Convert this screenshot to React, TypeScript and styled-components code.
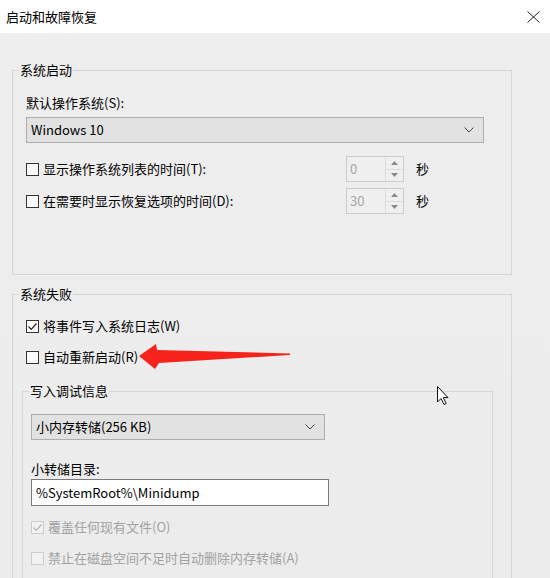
import React from "react";
import styled, { createGlobalStyle } from "styled-components";

const GlobalStyle = createGlobalStyle`
  html, body {
    margin: 0;
    padding: 0;
    background: #ededed;
  }
  body {
    font-family: "Noto Sans CJK SC", "Noto Sans", sans-serif;
    font-size: 13px;
    color: #000;
  }
`;

const Window = styled.div`
  position: relative;
  width: 550px;
  height: 578px;
  overflow: hidden;
  background: linear-gradient(180deg, #eeeeee 0%, #ececec 100%);
`;

const TitleBar = styled.div`
  height: 33px;
  background: #ffffff;
  display: flex;
  align-items: center;
  justify-content: space-between;
  padding: 0 10px 0 6px;
  box-sizing: border-box;
`;

const Title = styled.span`
  font-size: 13px;
  line-height: 20px;
  color: #000;
`;

const Body = styled.div`
  padding: 0 0 0 12px;
`;

const Group = styled.fieldset<{ $top: number; $width: number; $pad: number; $bottom?: number }>`
  margin: ${(p) => p.$top}px 0 0 0;
  width: ${(p) => p.$width}px;
  box-sizing: border-box;
  border: 1px solid #d6d6d6;
  padding: 0 0 ${(p) => p.$bottom ?? 0}px ${(p) => p.$pad}px;
  min-width: 0;
`;

const Legend = styled.legend<{ $shift: number }>`
  margin-left: ${(p) => p.$shift}px;
  padding: 0 1px;
  line-height: 20px;
  font-size: 13px;
  color: #000;
`;

const InnerGroup = styled(Group)`
  margin-left: -4px;
  height: 220px;
`;

const Label = styled.div<{ $top: number }>`
  margin-top: ${(p) => p.$top}px;
  line-height: 20px;
  height: 20px;
`;

const Select = styled.div<{ $top: number; $width: number }>`
  margin-top: ${(p) => p.$top}px;
  width: ${(p) => p.$width}px;
  height: 26px;
  box-sizing: border-box;
  border: 1px solid #adadad;
  background: #e2e2e2;
  display: flex;
  align-items: center;
  justify-content: space-between;
  padding: 0 9px 0 4px;
  line-height: 20px;
`;

const TextInput = styled.div`
  width: 298px;
  height: 27px;
  box-sizing: border-box;
  border: 1px solid #7a7a7a;
  background: #ffffff;
  display: flex;
  align-items: center;
  padding: 0 4px;
  line-height: 20px;
`;

const SpinRow = styled.div<{ $top: number }>`
  margin-top: ${(p) => p.$top}px;
  display: grid;
  grid-template-columns: 308px 58px auto;
  column-gap: 12px;
  align-items: center;
  height: 26px;
`;

const CheckRow = styled.div<{ $top: number; $disabled?: boolean }>`
  margin-top: ${(p) => p.$top}px;
  display: flex;
  align-items: center;
  gap: 4px;
  height: 20px;
  line-height: 20px;
  color: ${(p) => (p.$disabled ? "#a2a2a2" : "#000")};
`;

const Box = styled.span<{ $disabled?: boolean }>`
  width: 13px;
  height: 13px;
  box-sizing: border-box;
  border: 1px solid ${(p) => (p.$disabled ? "#cccccc" : "#333333")};
  background: ${(p) => (p.$disabled ? "#f2f2f2" : "#fbfbfb")};
  display: flex;
  align-items: center;
  justify-content: center;
  flex: none;
`;

const Spinner = styled.div`
  height: 26px;
  box-sizing: border-box;
  border: 1px solid #cccccc;
  display: flex;
  background: #efefef;
`;

const SpinValue = styled.span`
  flex: 1;
  color: #a6a6a6;
  padding-left: 3px;
  line-height: 24px;
`;

const SpinButtons = styled.div`
  width: 17px;
  display: flex;
  flex-direction: column;
  border-left: 1px solid #dcdcdc;
`;

const SpinButton = styled.div<{ $last?: boolean }>`
  flex: 1;
  display: flex;
  align-items: center;
  justify-content: center;
  border-top: ${(p) => (p.$last ? "1px solid #dcdcdc" : "none")};
`;

const Unit = styled.span`
  line-height: 20px;
`;

const Overlay = styled.svg<{ $x: number; $y: number }>`
  position: absolute;
  left: ${(p) => p.$x}px;
  top: ${(p) => p.$y}px;
  pointer-events: none;
`;

const Chevron = () => (
  <svg width="10" height="6" viewBox="0 0 10 6">
    <polyline points="0.5,0.5 5,5 9.5,0.5" fill="none" stroke="#444" strokeWidth="1" />
  </svg>
);

const Check = ({ color }: { color: string }) => (
  <svg width="11" height="11" viewBox="0 0 11 11">
    <polyline points="1.5,5.5 4.2,8.3 9.5,2.5" fill="none" stroke={color} strokeWidth="1.2" />
  </svg>
);

const Tri = ({ up }: { up?: boolean }) => (
  <svg width="7" height="4" viewBox="0 0 7 4">
    <polygon points={up ? "0,4 3.5,0 7,4" : "0,0 3.5,4 7,0"} fill="#8a8a8a" />
  </svg>
);

const CheckBox = ({ checked, disabled }: { checked?: boolean; disabled?: boolean }) => (
  <Box $disabled={disabled}>{checked && <Check color={disabled ? "#b4b4b4" : "#222"} />}</Box>
);

const SpinField = ({ label, value, top }: { label: string; value: string; top: number }) => (
  <SpinRow $top={top}>
    <CheckRow $top={0}>
      <CheckBox />
      <span>{label}</span>
    </CheckRow>
    <Spinner>
      <SpinValue>{value}</SpinValue>
      <SpinButtons>
        <SpinButton>
          <Tri up />
        </SpinButton>
        <SpinButton $last>
          <Tri />
        </SpinButton>
      </SpinButtons>
    </Spinner>
    <Unit>秒</Unit>
  </SpinRow>
);

const App: React.FC = () => {
  return (
    <>
      <GlobalStyle />
      <Window>
        <TitleBar>
          <Title>启动和故障恢复</Title>
          <svg width="13" height="12" viewBox="0 0 13 12">
            <path d="M0.5 0.5 L12.5 11.5 M12.5 0.5 L0.5 11.5" stroke="#222" strokeWidth="1" />
          </svg>
        </TitleBar>
        <Body>
          <Group $top={27} $width={500} $pad={13} $bottom={60}>
            <Legend $shift={-7}>系统启动</Legend>
            <Label $top={13}>默认操作系统(S):</Label>
            <Select $top={4} $width={458}>
              <span>Windows 10</span>
              <Chevron />
            </Select>
            <SpinField top={13} label="显示操作系统列表的时间(T):" value="0" />
            <SpinField top={6} label="在需要时显示恢复选项的时间(D):" value="30" />
          </Group>

          <Group $top={9} $width={500} $pad={13}>
            <Legend $shift={-7}>系统失败</Legend>
            <CheckRow $top={12}>
              <CheckBox checked />
              <span>将事件写入系统日志(W)</span>
            </CheckRow>
            <CheckRow $top={11}>
              <CheckBox />
              <span>自动重新启动(R)</span>
            </CheckRow>
            <InnerGroup $top={14} $width={471} $pad={8}>
              <Legend $shift={-2}>写入调试信息</Legend>
              <Select $top={13} $width={294}>
                <span>小内存转储(256 KB)</span>
                <Chevron />
              </Select>
              <Label $top={19}>小转储目录:</Label>
              <TextInput>%SystemRoot%\Minidump</TextInput>
              <CheckRow $top={11} $disabled>
                <CheckBox checked disabled />
                <span>覆盖任何现有文件(O)</span>
              </CheckRow>
              <CheckRow $top={11} $disabled>
                <CheckBox disabled />
                <span>禁止在磁盘空间不足时自动删除内存转储(A)</span>
              </CheckRow>
            </InnerGroup>
          </Group>
        </Body>

        <Overlay $x={136} $y={340} width="160" height="32" viewBox="0 0 160 32">
          <path d="M3 16 L20 4 L21 10 L154 13.5 L154 15 L23 23 L19 29 Z" fill="#f5231b" />
        </Overlay>

        <Overlay $x={436} $y={385} width="14" height="22" viewBox="0 0 14 22">
          <path
            d="M1.5 1.5 L1.5 17 L5 13.5 L8 19.5 L10.2 18.5 L7.3 12.6 L12 12.6 Z"
            fill="#ffffff"
            stroke="#111"
            strokeWidth="1"
            strokeLinejoin="miter"
          />
        </Overlay>
      </Window>
    </>
  );
};

export default App;
